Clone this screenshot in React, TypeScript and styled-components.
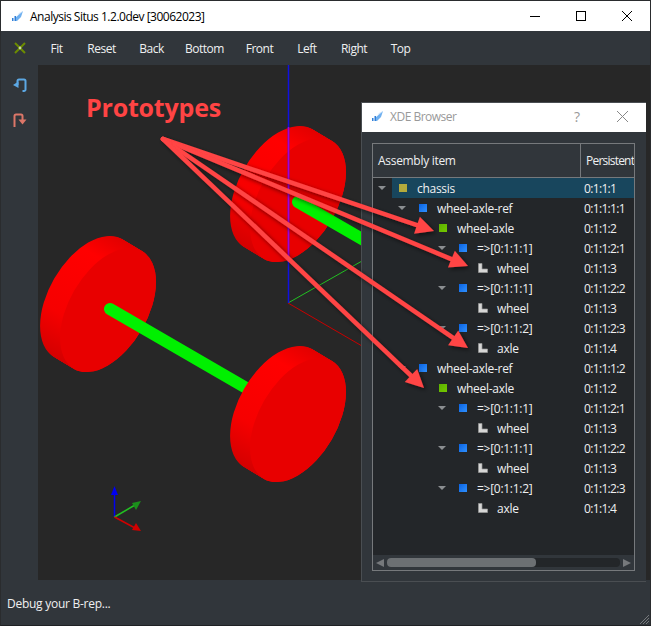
import React from "react";
import styled, { createGlobalStyle } from "styled-components";

const Global = createGlobalStyle`
  html, body { margin: 0; padding: 0; background: #1f2124; }
  * { box-sizing: border-box; }
  body { font-family: "Open Sans", "Noto Sans", sans-serif; font-size: 12px; }
`;

const Root = styled.div`
  position: relative;
  width: 651px;
  height: 626px;
  overflow: hidden;
`;
const Win = styled.div`
  width: 651px;
  height: 626px;
  display: flex;
  flex-direction: column;
  border: 1px solid #2a2c2e;
  border-bottom-color: #1f2124;
  background: #31363b;
`;
const TitleBar = styled.div`
  height: 30px;
  flex: none;
  background: #fff;
  display: flex;
  align-items: center;
  padding-left: 11px;
  color: #000;
  letter-spacing: -0.49px;
`;
const TitleText = styled.span`
  margin-left: 7px;
  flex: 1;
`;
const Caption = styled.div`
  width: 46px;
  height: 30px;
  display: flex;
  align-items: center;
  justify-content: center;
`;
const Toolbar = styled.div`
  height: 34px;
  flex: none;
  display: flex;
  align-items: center;
  background: #31363b;
`;
const ToolIcon = styled.div`
  width: 37px;
  display: flex;
  justify-content: center;
`;
const ToolButton = styled.div<{ $w: number }>`
  width: ${(p) => p.$w}px;
  text-align: center;
  color: #eff0f1;
  letter-spacing: -0.5px;
`;
const Body = styled.div`
  flex: 1;
  display: flex;
  min-height: 0;
`;
const Side = styled.div`
  width: 37px;
  flex: none;
  padding-top: 2px;
  display: flex;
  flex-direction: column;
`;
const SideButton = styled.div`
  height: 35px;
  display: flex;
  align-items: center;
  justify-content: center;
`;
const Viewport = styled.div`
  flex: 1;
  background: #272727;
  overflow: hidden;
  svg { display: block; }
`;
const StatusBar = styled.div`
  height: 45px;
  flex: none;
  display: flex;
  align-items: center;
  padding: 1px 0 0 6px;
  color: #eff0f1;
  letter-spacing: -0.26px;
`;
const Label = styled.div`
  position: absolute;
  left: 86px;
  top: 90px;
  color: #ff4444;
  font-weight: 700;
  font-size: 25px;
  line-height: 34px;
  letter-spacing: -0.2px;
`;
const Dialog = styled.div`
  position: absolute;
  left: 361px;
  top: 102px;
  width: 285px;
  height: 480px;
  background: #31363b;
  border: 1px solid #4a4e52;
  border-width: 1px 0 1px 1px;
  display: flex;
  flex-direction: column;
`;
const DialogTitle = styled.div`
  height: 29px;
  flex: none;
  background: #fff;
  display: flex;
  align-items: center;
  padding: 0 0 2px 10px;
  color: #999;
  letter-spacing: -0.5px;
`;
const DialogName = styled.span`
  margin-left: 7px;
  flex: 1;
`;
const Help = styled.span`
  width: 36px;
  font-size: 14px;
`;
const DialogClose = styled.div`
  width: 24px;
  margin-right: 12px;
  display: flex;
  justify-content: center;
`;
const DialogBody = styled.div`
  flex: 1;
  padding: 11px 11px 10px 10px;
  display: flex;
`;
const TableFrame = styled.div`
  flex: 1;
  border: 1px solid #76797c;
  display: flex;
  flex-direction: column;
  background: #232629;
  overflow: hidden;
`;
const Header = styled.div`
  height: 34px;
  flex: none;
  display: flex;
  background: #31363b;
  border-bottom: 1px solid #76797c;
  color: #eff0f1;
`;
const HeadCell = styled.div<{ $w?: number }>`
  display: flex;
  align-items: center;
  white-space: nowrap;
  overflow: hidden;
  padding-left: 5px;
  ${(p) =>
    p.$w
      ? `width: ${p.$w}px; flex: none; border-right: 1px solid #76797c; letter-spacing: -0.3px;`
      : `flex: 1; letter-spacing: -0.78px;`}
`;
const Rows = styled.div`
  flex: 1;
`;
const RowBox = styled.div`
  height: 20px;
  display: flex;
  align-items: center;
  color: #eff0f1;
  white-space: nowrap;
`;
const NameCell = styled.div<{ $level: number; $active?: boolean }>`
  width: 208px;
  height: 100%;
  flex: none;
  display: flex;
  align-items: center;
  letter-spacing: -0.28px;
  padding-left: ${(p) => p.$level * 20}px;
  ${(p) => p.$active && `background: linear-gradient(90deg, transparent 19px, #18465d 19px);`}
`;
const ValueCell = styled.div<{ $active?: boolean }>`
  flex: 1;
  height: 100%;
  display: flex;
  align-items: center;
  padding-left: 3px;
  letter-spacing: -0.66px;
  ${(p) => p.$active && `background: #18465d;`}
`;
const Branch = styled.div`
  width: 26px;
  flex: none;
  display: flex;
  padding-left: 5px;
`;
const Caret = styled.div`
  width: 0;
  height: 0;
  border-left: 4px solid transparent;
  border-right: 4px solid transparent;
  border-top: 4px solid #8b8e91;
  margin-top: -1px;
`;
const Swatch = styled.div<{ $from: string; $to: string }>`
  width: 8px;
  height: 8px;
  flex: none;
  margin-right: 10px;
  margin-top: -1px;
  background: linear-gradient(135deg, ${(p) => p.$from}, ${(p) => p.$to});
`;
const PartIcon = styled.svg`
  width: 10px;
  height: 10px;
  flex: none;
  margin-right: 9px;
  margin-left: -1px;
`;
const ScrollBar = styled.div`
  height: 15px;
  flex: none;
  background: #31363b;
  display: flex;
  align-items: center;
  padding: 0 3px;
  gap: 3px;
`;
const ScrollArrow = styled.div<{ $right?: boolean }>`
  width: 0;
  height: 0;
  border-top: 4px solid transparent;
  border-bottom: 4px solid transparent;
  ${(p) => (p.$right ? `border-left: 8px solid #76797c;` : `border-right: 8px solid #76797c;`)}
`;
const ScrollTrack = styled.div`
  flex: 1;
  height: 9px;
  background: #232629;
  border-radius: 4px;
`;
const ScrollThumb = styled.div`
  width: 149px;
  height: 9px;
  border-radius: 4px;
  background: #6c7073;
`;
const Overlay = styled.svg`
  position: absolute;
  left: 0;
  top: 0;
  pointer-events: none;
`;

const Logo = ({ size = 11 }: { size?: number }) => (
  <svg width={size} height={size} viewBox="0 0 11 11">
    <path d="M3 7 L11 0 L9 6 L5 10 L3 10Z" fill="#6fb0f0" />
    <path d="M5 5 L11 0 L7 2Z" fill="#cfe4fa" />
    <rect x="0" y="7" width="1.5" height="3" fill="#2f7fd8" />
    <rect x="2.5" y="5" width="1.5" height="5" fill="#2f7fd8" />
  </svg>
);

const Wheel = ({ x, y }: { x: number; y: number }) => {
  const steps = Array.from({ length: 21 }, (_, i) => i);
  return (
    <g>
      {steps.map((i) => {
        const cx = x - 20 + i;
        const cy = y - 12 + i * 0.6;
        return (
          <ellipse
            key={i}
            cx={cx}
            cy={cy}
            rx={39}
            ry={68}
            transform={`rotate(30 ${cx} ${cy})`}
            fill="url(#rim)"
          />
        );
      })}
      <ellipse cx={x} cy={y} rx={39} ry={68} transform={`rotate(30 ${x} ${y})`} fill="#e80000" />
    </g>
  );
};

const Scene = () => (
  <svg width="612" height="516" viewBox="38 65 612 516">
    <defs>
      <linearGradient id="rim" x1="0" y1="0" x2="0" y2="1">
        <stop offset="0" stopColor="#e20000" />
        <stop offset="0.2" stopColor="#ff0000" />
        <stop offset="0.7" stopColor="#f60000" />
        <stop offset="1" stopColor="#d40000" />
      </linearGradient>
    </defs>
    <line x1="288" y1="303" x2="362" y2="261" stroke="#22c022" strokeWidth="1" />
    <line x1="288" y1="303" x2="362" y2="346" stroke="#c80000" strokeWidth="1" />
    <Wheel x={298} y={200} />
    <line x1="288.5" y1="65" x2="288.5" y2="303" stroke="#1010e0" strokeWidth="1.5" />
    <line x1="288.5" y1="127" x2="288.5" y2="262" stroke="#a000e0" strokeWidth="1.5" />
    <line x1="298" y1="202" x2="400" y2="261" stroke="#00f000" strokeWidth="12" strokeLinecap="round" />
    <Wheel x={108} y={310} />
    <line x1="110" y1="309" x2="260" y2="396" stroke="#00f000" strokeWidth="12" strokeLinecap="round" />
    <Wheel x={298} y={420} />
    <line x1="114.5" y1="517" x2="114.5" y2="492" stroke="#0000f0" strokeWidth="1.5" />
    <path d="M114.5 486 L118 495 L111 495Z" fill="#0000f0" />
    <line x1="114.5" y1="517" x2="135" y2="505" stroke="#22c022" strokeWidth="1.5" />
    <path d="M141 501 L136 510 L132 503Z" fill="#1b8f1b" />
    <line x1="114.5" y1="517" x2="135" y2="528" stroke="#d00000" strokeWidth="1.5" />
    <path d="M141 531 L132 530 L136 523Z" fill="#d00000" />
  </svg>
);

const Arrow = ({ tx, ty }: { tx: number; ty: number }) => {
  const sx = 163;
  const sy = 139;
  const dx = tx - sx;
  const dy = ty - sy;
  const len = Math.hypot(dx, dy);
  const ux = dx / len;
  const uy = dy / len;
  const bx = tx - ux * 18;
  const by = ty - uy * 18;
  const head = `${tx},${ty} ${bx - uy * 9},${by + ux * 9} ${bx + uy * 9},${by - ux * 9}`;
  return (
    <g>
      <line x1={sx} y1={sy} x2={bx} y2={by} stroke="#ff4444" strokeWidth="4.5" strokeLinecap="round" />
      <polygon points={head} fill="#ff4444" />
    </g>
  );
};

type Node = { name: string; id: string; level: number; kind: "chassis" | "ref" | "proto" | "part" };

const half = (first: string): Node[] => [
  { name: "wheel-axle-ref", id: first, level: 1, kind: "ref" },
  { name: "wheel-axle", id: "0:1:1:2", level: 2, kind: "proto" },
  { name: "=>[0:1:1:1]", id: "0:1:1:2:1", level: 3, kind: "ref" },
  { name: "wheel", id: "0:1:1:3", level: 4, kind: "part" },
  { name: "=>[0:1:1:1]", id: "0:1:1:2:2", level: 3, kind: "ref" },
  { name: "wheel", id: "0:1:1:3", level: 4, kind: "part" },
  { name: "=>[0:1:1:2]", id: "0:1:1:2:3", level: 3, kind: "ref" },
  { name: "axle", id: "0:1:1:4", level: 4, kind: "part" },
];

const nodes: Node[] = [
  { name: "chassis", id: "0:1:1:1", level: 0, kind: "chassis" },
  ...half("0:1:1:1:1"),
  ...half("0:1:1:1:2"),
];

const swatches = {
  chassis: ["#b5ab3c", "#b5ab3c"],
  ref: ["#0a62e0", "#2f90ff"],
  proto: ["#5cb000", "#74c800"],
};

const tools: [string, number][] = [
  ["Fit", 37],
  ["Reset", 53],
  ["Back", 47],
  ["Bottom", 59],
  ["Front", 51],
  ["Left", 44],
  ["Right", 50],
  ["Top", 43],
];

const Row = ({ node }: { node: Node }) => {
  const active = node.kind === "chassis";
  return (
    <RowBox>
      <NameCell $level={node.level} $active={active}>
        <Branch>{node.kind !== "part" && node.kind !== "proto" && <Caret />}</Branch>
        {node.kind === "part" ? (
          <PartIcon viewBox="0 0 10 10">
            <path d="M0.5 0.5H4V6H9.5V9.5H0.5Z" fill="#d6d6d6" stroke="#9a9a9a" strokeWidth="0.7" />
          </PartIcon>
        ) : (
          <Swatch $from={swatches[node.kind][0]} $to={swatches[node.kind][1]} />
        )}
        {node.name}
      </NameCell>
      <ValueCell $active={active}>{node.id}</ValueCell>
    </RowBox>
  );
};

export default function App() {
  return (
    <Root>
      <Global />
      <Win>
        <TitleBar>
          <Logo />
          <TitleText>Analysis Situs 1.2.0dev [30062023]</TitleText>
          <Caption>
            <svg width="10" height="10" viewBox="0 0 10 10">
              <line x1="0" y1="5.5" x2="10" y2="5.5" stroke="#000" />
            </svg>
          </Caption>
          <Caption>
            <svg width="10" height="10" viewBox="0 0 10 10">
              <rect x="0.5" y="0.5" width="9" height="9" fill="none" stroke="#000" />
            </svg>
          </Caption>
          <Caption>
            <svg width="10" height="10" viewBox="0 0 10 10">
              <path d="M0 0L10 10M10 0L0 10" stroke="#000" />
            </svg>
          </Caption>
        </TitleBar>
        <Toolbar>
          <ToolIcon>
            <svg width="12" height="12" viewBox="0 0 12 12">
              <path d="M1 1L11 11M11 1L1 11" stroke="#6c8c00" strokeWidth="2" />
              <circle cx="6" cy="6" r="1.4" fill="#c8d8a0" />
            </svg>
          </ToolIcon>
          {tools.map(([t, w]) => (
            <ToolButton key={t} $w={w}>
              {t}
            </ToolButton>
          ))}
        </Toolbar>
        <Body>
          <Side>
            <SideButton>
              <svg width="16" height="16" viewBox="0 0 16 16">
                <path
                  d="M10.5 14H12a1.5 1.5 0 0 0 1.5-1.5V4a1.5 1.5 0 0 0-1.5-1.5H7a1.5 1.5 0 0 0-1.5 1.5V8"
                  fill="none"
                  stroke="#5ca8e4"
                  strokeWidth="2"
                />
                <path d="M1 8L6.5 4.5V11Z" fill="#5ca8e4" />
              </svg>
            </SideButton>
            <SideButton>
              <svg width="16" height="16" viewBox="0 0 16 16">
                <path
                  d="M2.5 15V4a1.5 1.5 0 0 1 1.5-1.5H9a1.5 1.5 0 0 1 1.5 1.5V8"
                  fill="none"
                  stroke="#dc7668"
                  strokeWidth="2"
                />
                <path d="M6.5 7.5H14.5L10.5 12.5Z" fill="#dc7668" />
              </svg>
            </SideButton>
          </Side>
          <Viewport>
            <Scene />
          </Viewport>
        </Body>
        <StatusBar>Debug your B-rep...</StatusBar>
      </Win>
      <Label>Prototypes</Label>
      <Dialog>
        <DialogTitle>
          <Logo />
          <DialogName>XDE Browser</DialogName>
          <Help>?</Help>
          <DialogClose>
            <svg width="11" height="11" viewBox="0 0 11 11">
              <path d="M0 0L11 11M11 0L0 11" stroke="#888" />
            </svg>
          </DialogClose>
        </DialogTitle>
        <DialogBody>
          <TableFrame>
            <Header>
              <HeadCell $w={208}>Assembly item</HeadCell>
              <HeadCell>Persistent</HeadCell>
            </Header>
            <Rows>
              {nodes.map((n, i) => (
                <Row key={i} node={n} />
              ))}
            </Rows>
            <ScrollBar>
              <ScrollArrow />
              <ScrollTrack>
                <ScrollThumb />
              </ScrollTrack>
              <ScrollArrow $right />
            </ScrollBar>
          </TableFrame>
        </DialogBody>
      </Dialog>
      <Overlay width="651" height="626" viewBox="0 0 651 626">
        <defs>
          <filter id="shade" x="-10%" y="-10%" width="120%" height="120%">
            <feDropShadow dx="2" dy="2" stdDeviation="2" floodColor="#000" floodOpacity="0.55" />
          </filter>
        </defs>
        <g filter="url(#shade)">
          <Arrow tx={434} ty={231} />
          <Arrow tx={468} ty={266} />
          <Arrow tx={468} ty={348} />
          <Arrow tx={424} ty={388} />
        </g>
        <path d="M640 624L649 615M643 624L649 618M646 624L649 621" stroke="#76797c" strokeWidth="1" />
      </Overlay>
    </Root>
  );
}
